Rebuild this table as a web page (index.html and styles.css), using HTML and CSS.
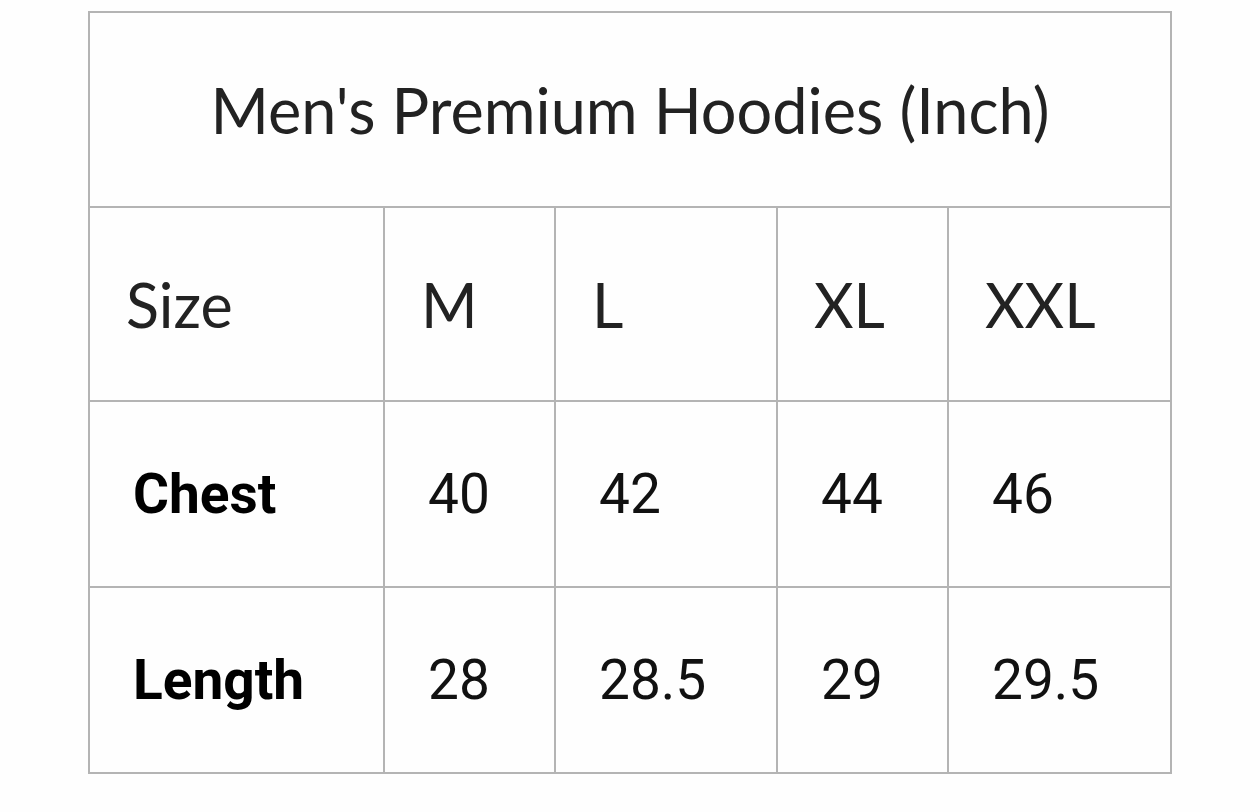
FILE: index.html
```html
<!DOCTYPE html>
<html>
<head>
<meta charset="utf-8">
<link rel="stylesheet" href="styles.css">
</head>
<body>
<table class="size-chart">
  <colgroup>
    <col class="c1"><col class="c2"><col class="c3"><col class="c4"><col class="c5">
  </colgroup>
  <tr class="title-row"><td colspan="5">Men's Premium Hoodies (Inch)</td></tr>
  <tr class="head-row"><td>Size</td><td>M</td><td>L</td><td>XL</td><td>XXL</td></tr>
  <tr class="body-row"><td class="label">Chest</td><td>40</td><td>42</td><td>44</td><td>46</td></tr>
  <tr class="body-row"><td class="label">Length</td><td>28</td><td>28.5</td><td>29</td><td>29.5</td></tr>
</table>
</body>
</html>
```
FILE: styles.css
```css
html, body {
  margin: 0;
  padding: 0;
  background: #fefefe;
}
body {
  padding: 11px 0 0 88px;
}
.size-chart {
  border-collapse: collapse;
  table-layout: fixed;
  width: 1084px;
  border: 2px solid #b4b4b4;
}
.c1 { width: 295px; }
.c2 { width: 171px; }
.c3 { width: 222px; }
.c4 { width: 171px; }
.c5 { width: 223px; }
.size-chart td {
  border: 2px solid #b4b4b4;
  padding: 0;
  vertical-align: middle;
  white-space: nowrap;
}
.title-row td {
  height: 193px;
  text-align: center;
  font-family: Lato, "Open Sans", sans-serif;
  font-size: 63px;
  color: #222;
}
.head-row td {
  height: 192px;
  padding-left: 36px;
  font-family: Lato, "Open Sans", sans-serif;
  font-size: 61px;
  color: #222;
}
.body-row td {
  height: 184px;
  padding-left: 43px;
  font-family: Roboto, sans-serif;
  font-size: 55px;
  color: #111;
}
.body-row td.label {
  font-weight: bold;
  color: #000;
}
```
